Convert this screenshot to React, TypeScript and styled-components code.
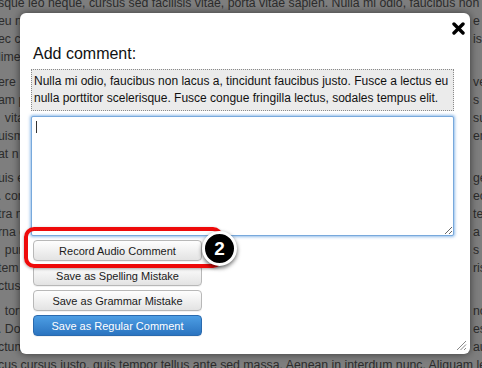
import React from "react";
import styled, { createGlobalStyle } from "styled-components";

const Global = createGlobalStyle`
  html, body { margin: 0; padding: 0; }
  body {
    width: 482px;
    height: 368px;
    overflow: hidden;
    background: #7e7e7e;
    font-family: "Liberation Sans", Arial, Helvetica, sans-serif;
  }
`;

const Page = styled.div`
  position: relative;
  width: 482px;
  height: 368px;
  overflow: hidden;
  background: #7e7e7e;
`;

const Backdrop = styled.div`
  display: flex;
  flex-direction: column;
  gap: 6.5px;
  margin-top: -6px;
  margin-left: -2px;
  color: #2c2c2c;
  font-size: 12.3px;
`;

const Para = styled.div`
  display: flex;
  flex-direction: column;
`;

const Line = styled.div`
  display: flex;
  justify-content: space-between;
  height: 18px;
  line-height: 18px;
  white-space: nowrap;
`;

const LeftFrag = styled.span`
  white-space: pre;
`;

const RightFrag = styled.span`
  width: 9px;
  overflow: visible;
`;

const Dialog = styled.div`
  position: absolute;
  left: 20px;
  top: 13px;
  width: 450px;
  height: 341px;
  box-sizing: border-box;
  padding: 31px 16px 0 11px;
  background: #ffffff;
  border-radius: 6px;
  box-shadow: 0 0 8px rgba(0, 0, 0, 0.55);
  display: flex;
  flex-direction: column;
`;

const CloseButton = styled.button`
  position: absolute;
  top: 8px;
  right: 5px;
  width: 14px;
  height: 14px;
  padding: 0;
  border: 0;
  background: none;
  display: flex;
  align-items: center;
  justify-content: center;
`;

const Title = styled.h2`
  margin: 0 0 5px 2px;
  font-size: 16px;
  line-height: 20px;
  font-weight: normal;
  color: #111;
`;

const Quote = styled.div`
  border: 1px dotted #8a8a8a;
  background: #ebebeb;
  padding: 3px 2px;
  font-size: 12px;
  line-height: 17px;
  color: #111;
  white-space: nowrap;
  margin-bottom: 5px;
`;

const TextWrap = styled.div`
  position: relative;
  height: 120px;
  margin-bottom: 4px;
`;

const TextBox = styled.textarea`
  display: block;
  width: 100%;
  height: 100%;
  box-sizing: border-box;
  margin: 0;
  border: 1px solid #78a9dc;
  border-radius: 2px;
  box-shadow: 0 0 3px 1px rgba(110, 165, 225, 0.75);
  outline: none;
  font-family: "Liberation Sans", Arial, sans-serif;
  font-size: 12px;
  background: #fff;
`;

const Caret = styled.span`
  position: absolute;
  left: 5px;
  top: 5px;
  width: 1px;
  height: 12px;
  background: #333;
`;

const ButtonStack = styled.div`
  display: flex;
  flex-direction: column;
  gap: 4px;
  padding-left: 2px;
`;

const Btn = styled.button<{ $primary?: boolean }>`
  width: 169px;
  height: 21px;
  padding: 0;
  border-radius: 4px;
  font-family: "Liberation Sans", Arial, sans-serif;
  font-size: 11px;
  border: 1px solid ${(p) => (p.$primary ? "#2a6aae" : "#b8b8b8")};
  color: ${(p) => (p.$primary ? "#ffffff" : "#1a1a1a")};
  background: ${(p) =>
    p.$primary
      ? "linear-gradient(#4d9ee4, #2b74c0)"
      : "linear-gradient(#fefefe, #e3e3e3)"};
  box-shadow: 0 1px 0 rgba(0, 0, 0, 0.05);
`;

const Grip = styled.svg`
  position: absolute;
  right: 3px;
  bottom: 3px;
`;

const Callout = styled.div`
  position: absolute;
  left: 24px;
  top: 227px;
  width: 199px;
  height: 41px;
  box-sizing: border-box;
  border: 4px solid #ee0a0a;
  border-radius: 10px;
  box-shadow: 0 1px 3px rgba(0, 0, 0, 0.35);
`;

const Badge = styled.div`
  position: absolute;
  left: 202px;
  top: 231px;
  width: 35px;
  height: 35px;
  box-sizing: border-box;
  border-radius: 50%;
  border: 3px solid #ffffff;
  background: #000;
  color: #fff;
  font-family: "Liberation Sans", Arial, sans-serif;
  font-weight: bold;
  font-size: 19px;
  display: flex;
  align-items: center;
  justify-content: center;
  box-shadow: 0 2px 4px rgba(0, 0, 0, 0.6);
`;

const paragraphs: [string, string][][] = [
  [
    ["sque leo neque, cursus sed facilisis vitae, porta vitae sapien. Nulla mi odio, faucibus non lacus", ""],
    ["eu nibh", "e e"],
    ["ec commodo", "is"],
    ["lime", ""],
  ],
  [
    ["ere", "veh"],
    ["am p", "s c"],
    ["  vita", "su"],
    ["uism", "em"],
    ["at n", ""],
  ],
  [
    ["uis e", "get"],
    [". con", "ec"],
    ["tra n", "te"],
    ["rna c", "a n"],
    ["  pur", "s la"],
    ["tem", "risc"],
    ["ctus", ""],
  ],
  [
    ["  tort", "nc"],
    [". Do", "esc"],
    ["ctum", "au"],
    ["cus cursus justo, quis tempor tellus ante sed massa. Aenean in interdum nunc. Aliquam leo", ""],
  ],
];

export default function App() {
  return (
    <Page>
      <Global />
      <Backdrop>
        {paragraphs.map((p, i) => (
          <Para key={i}>
            {p.map(([l, r], j) => (
              <Line key={j}>
                <LeftFrag>{l}</LeftFrag>
                {r && <RightFrag>{r}</RightFrag>}
              </Line>
            ))}
          </Para>
        ))}
      </Backdrop>

      <Dialog>
        <CloseButton aria-label="Close">
          <svg width="13" height="13" viewBox="0 0 13 13">
            <path d="M2 2 L11 11 M11 2 L2 11" stroke="#000" strokeWidth="3.4" strokeLinecap="round" />
          </svg>
        </CloseButton>
        <Title>Add comment:</Title>
        <Quote>
          Nulla mi odio, faucibus non lacus a, tincidunt faucibus justo. Fusce a lectus eu
          <br />
          nulla porttitor scelerisque. Fusce congue fringilla lectus, sodales tempus elit.
        </Quote>
        <TextWrap>
          <TextBox />
          <Caret />
        </TextWrap>
        <ButtonStack>
          <Btn>Record Audio Comment</Btn>
          <Btn>Save as Spelling Mistake</Btn>
          <Btn>Save as Grammar Mistake</Btn>
          <Btn $primary>Save as Regular Comment</Btn>
        </ButtonStack>
        <Grip width="11" height="11" viewBox="0 0 11 11">
          <path d="M10 1 L1 10 M10 4.5 L4.5 10 M10 8 L8 10" stroke="#888" strokeWidth="1" />
        </Grip>
      </Dialog>

      <Callout />
      <Badge>2</Badge>
    </Page>
  );
}
